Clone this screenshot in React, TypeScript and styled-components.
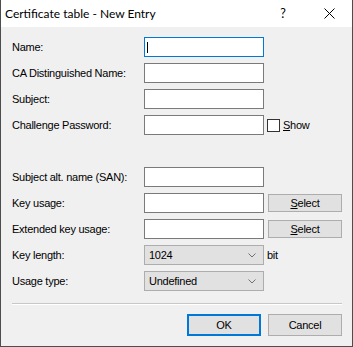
import React, { FC } from "react";
import styled, { createGlobalStyle } from "styled-components";

const GlobalStyle = createGlobalStyle`
  html, body {
    margin: 0;
    padding: 0;
    background: #f0f0f0;
  }
`;

const Window = styled.div`
  width: 353px;
  height: 347px;
  box-sizing: border-box;
  border: 1px solid #4d4d4d;
  border-top: none;
  background: #f0f0f0;
  display: flex;
  flex-direction: column;
  font-family: "Liberation Sans", Arial, sans-serif;
  font-size: 11px;
  letter-spacing: -0.25px;
  color: #000;
`;

const TitleBar = styled.div`
  height: 27px;
  background: #fff;
  display: flex;
  align-items: center;
  padding-left: 4px;
  font-family: Lato, "Noto Sans", sans-serif;
  font-size: 12px;
  letter-spacing: 0;
`;

const TitleText = styled.div`
  flex: 1;
`;

const CaptionButton = styled.div`
  width: 46px;
  height: 100%;
  display: flex;
  align-items: center;
  justify-content: center;
  font-size: 12.5px;
`;

const Body = styled.div`
  padding: 10px 10px 0 11px;
`;

const FormGrid = styled.div`
  display: grid;
  grid-template-columns: 128px 120px auto;
  grid-auto-rows: 20px;
  column-gap: 4px;
  row-gap: 6px;
`;

const Label = styled.div`
  align-self: center;
  white-space: nowrap;
`;

const Spacer = styled.div`
  grid-column: 1 / -1;
`;

const TextBox = styled.div<{ $focused?: boolean }>`
  position: relative;
  box-sizing: border-box;
  height: 20px;
  background: #fff;
  border: 1px solid ${({ $focused }) => ($focused ? "#0078d7" : "#7a7a7a")};

  ${({ $focused }) =>
    $focused &&
    `
    &::after {
      content: "";
      position: absolute;
      left: 2px;
      top: 4px;
      width: 1px;
      height: 11px;
      background: #000;
    }
  `}
`;

const Side = styled.div`
  display: flex;
  align-items: center;
`;

const CheckBox = styled.div`
  width: 13px;
  height: 13px;
  box-sizing: border-box;
  border: 1px solid #333;
  background: #fff;
  margin-left: -1px;
  margin-right: 3px;
`;

const Mnemonic = styled.span`
  text-decoration: underline;
`;

const PushButton = styled.div<{ $default?: boolean; $tall?: boolean }>`
  box-sizing: border-box;
  width: 74px;
  height: ${({ $tall }) => ($tall ? "22px" : "18px")};
  background: #e1e1e1;
  border: ${({ $default }) =>
    $default ? "2px solid #0078d7" : "1px solid #adadad"};
  display: flex;
  align-items: center;
  justify-content: center;
`;

const Combo = styled.div`
  box-sizing: border-box;
  height: 20px;
  background: #e1e1e1;
  border: 1px solid #adadad;
  display: flex;
  align-items: center;
  justify-content: space-between;
  padding: 0 7px 0 4px;
`;

const Unit = styled.div`
  align-self: center;
  margin-left: -1px;
`;

const Separator = styled.div`
  height: 1px;
  background: #c8c8c8;
  border-bottom: 1px solid #fff;
  margin-top: 12px;
`;

const Footer = styled.div`
  display: flex;
  justify-content: flex-end;
  gap: 7px;
  margin-top: 9px;
`;

const Chevron: FC = () => (
  <svg width="8" height="5" viewBox="0 0 8 5">
    <path d="M0.5 0.5 L4 4 L7.5 0.5" fill="none" stroke="#707070" strokeWidth="1" />
  </svg>
);

const CloseGlyph: FC = () => (
  <svg width="11" height="11" viewBox="0 0 11 11">
    <path d="M0.5 0.5 L10.5 10.5 M10.5 0.5 L0.5 10.5" stroke="#000" strokeWidth="1" />
  </svg>
);

const App: FC = () => {
  return (
    <>
      <GlobalStyle />
      <Window>
        <TitleBar>
          <TitleText>Certificate table - New Entry</TitleText>
          <CaptionButton>?</CaptionButton>
          <CaptionButton>
            <CloseGlyph />
          </CaptionButton>
        </TitleBar>
        <Body>
          <FormGrid>
            <Label>Name:</Label>
            <TextBox $focused />
            <div />

            <Label>CA Distinguished Name:</Label>
            <TextBox />
            <div />

            <Label>Subject:</Label>
            <TextBox />
            <div />

            <Label>Challenge Password:</Label>
            <TextBox />
            <Side>
              <CheckBox />
              <span>
                <Mnemonic>S</Mnemonic>how
              </span>
            </Side>

            <Spacer />

            <Label>Subject alt. name (SAN):</Label>
            <TextBox />
            <div />

            <Label>Key usage:</Label>
            <TextBox />
            <Side>
              <PushButton>
                <span>
                  <Mnemonic>S</Mnemonic>elect
                </span>
              </PushButton>
            </Side>

            <Label>Extended key usage:</Label>
            <TextBox />
            <Side>
              <PushButton>
                <span>
                  <Mnemonic>S</Mnemonic>elect
                </span>
              </PushButton>
            </Side>

            <Label>Key length:</Label>
            <Combo>
              <span>1024</span>
              <Chevron />
            </Combo>
            <Unit>bit</Unit>

            <Label>Usage type:</Label>
            <Combo>
              <span>Undefined</span>
              <Chevron />
            </Combo>
            <div />
          </FormGrid>
          <Separator />
          <Footer>
            <PushButton $default $tall>
              OK
            </PushButton>
            <PushButton $tall>Cancel</PushButton>
          </Footer>
        </Body>
      </Window>
    </>
  );
};

export default App;
